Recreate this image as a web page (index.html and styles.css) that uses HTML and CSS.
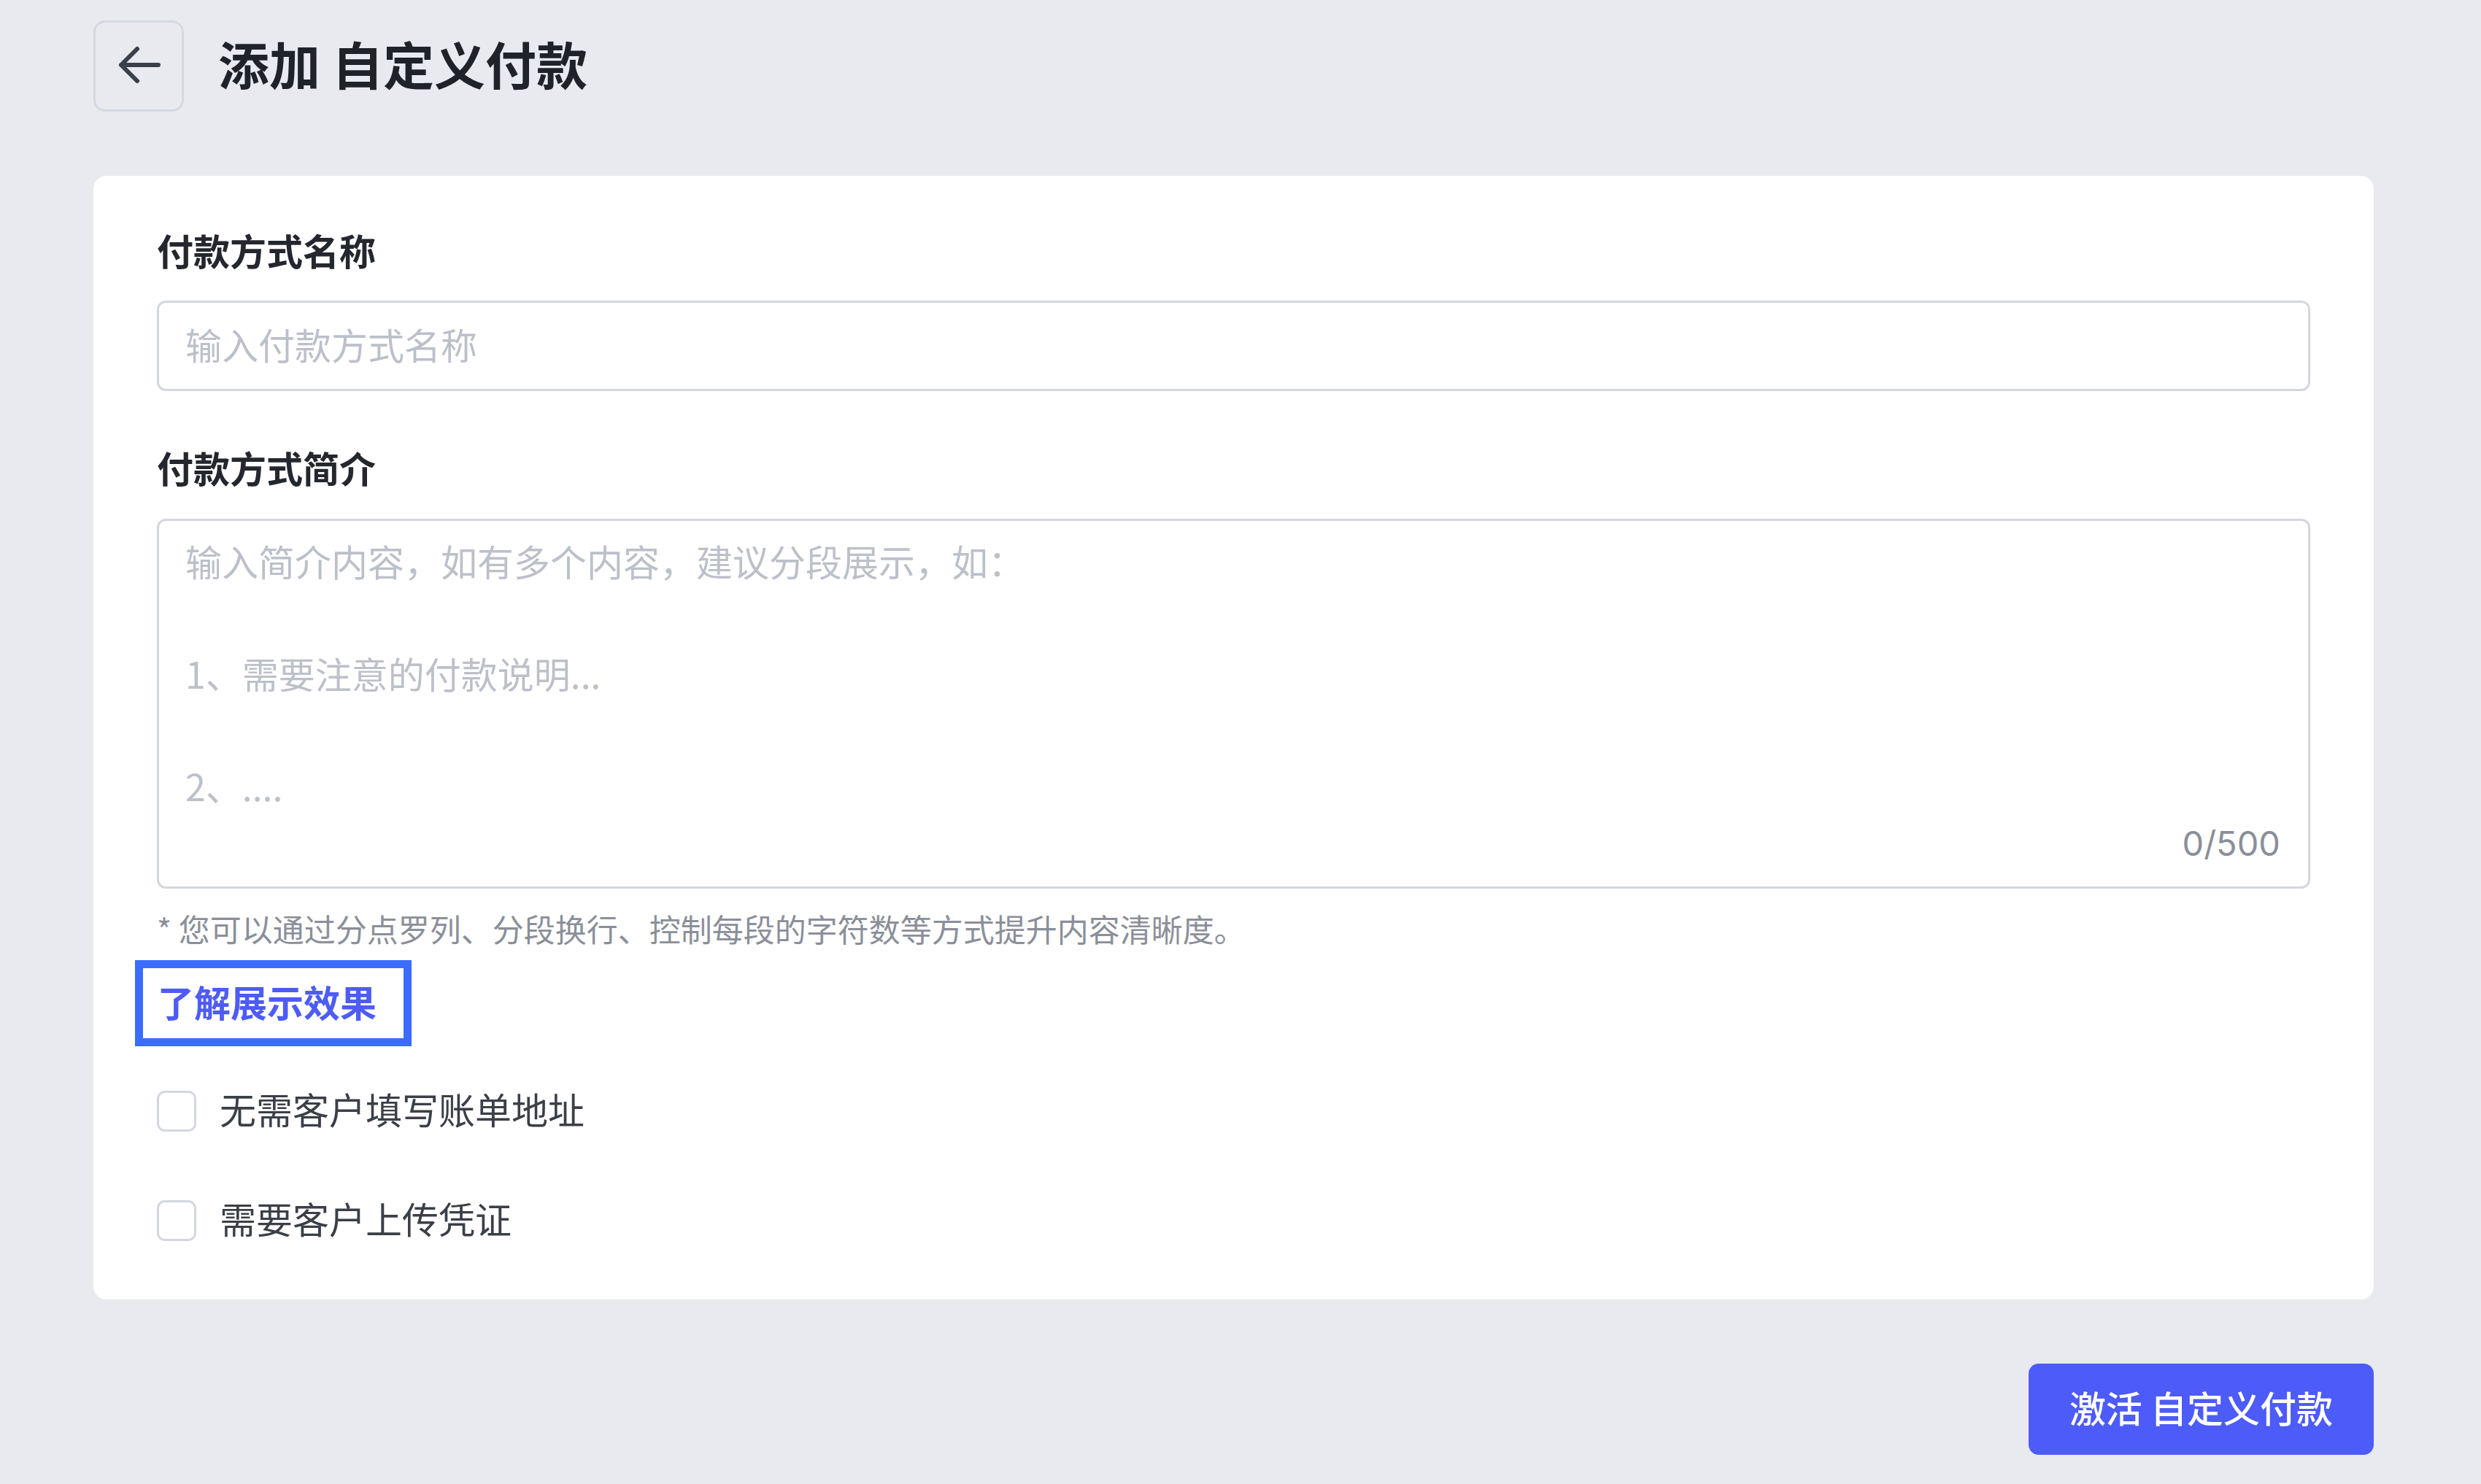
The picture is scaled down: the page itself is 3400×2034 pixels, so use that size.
FILE: index.html
```html
<!DOCTYPE html>
<html lang="zh-CN">
<head>
<meta charset="utf-8">
<title>添加 自定义付款</title>
<link rel="stylesheet" href="styles.css">
</head>
<body>
<div class="page">
  <header class="header">
    <button class="back-btn" type="button" aria-label="返回">
      <svg class="back-icon" viewBox="0 0 60 52" width="60" height="52" aria-hidden="true">
        <path d="M56 26 H5 M27 4 L5 26 L27 48" fill="none" stroke="#3a3f4a" stroke-width="6" stroke-linecap="round" stroke-linejoin="round"/>
      </svg>
    </button>
    <h1 class="title">添加 自定义付款</h1>
  </header>

  <section class="card">
    <div class="field-label">付款方式名称</div>
    <div class="input"><span class="placeholder">输入付款方式名称</span></div>

    <div class="field-label label-gap">付款方式简介</div>
    <div class="textarea">
      <div class="placeholder multi">输入简介内容，如有多个内容，建议分段展示，如：

1、需要注意的付款说明...

2、....</div>
      <span class="counter">0/500</span>
    </div>

    <p class="hint">* 您可以通过分点罗列、分段换行、控制每段的字符数等方式提升内容清晰度。</p>

    <a class="learn-link" href="#">了解展示效果</a>

    <label class="check-row first">
      <span class="checkbox"></span>
      <span class="check-text">无需客户填写账单地址</span>
    </label>
    <label class="check-row second">
      <span class="checkbox"></span>
      <span class="check-text">需要客户上传凭证</span>
    </label>
  </section>

  <div class="actions">
    <button class="primary-btn" type="button">激活 自定义付款</button>
  </div>
</div>
</body>
</html>
```

FILE: styles.css
```css
* {
  box-sizing: border-box;
}

html, body {
  margin: 0;
  padding: 0;
}

body {
  background: #e8eaef;
  font-family: "Noto Sans CJK SC", "Noto Sans", sans-serif;
  color: #22252b;
}

.page {
  width: 3125px;
  margin-left: 128px;
  padding-top: 28px;
}

.header {
  display: flex;
  align-items: center;
  gap: 47px;
  height: 125px;
}

.back-btn {
  width: 124px;
  height: 125px;
  border: 3px solid #d5d8e2;
  border-radius: 16px;
  background: transparent;
  display: flex;
  align-items: center;
  justify-content: center;
  padding: 0;
  cursor: pointer;
}

.back-icon {
  display: block;
  margin-left: 2px;
  margin-top: -3px;
}

.title {
  margin: 0 0 8px;
  font-size: 70px;
  line-height: 100px;
  font-weight: 700;
  color: #1f2228;
  letter-spacing: 0;
}

.card {
  margin-top: 88px;
  background: #ffffff;
  border-radius: 18px;
  padding: 66px 87px 80px;
}

.field-label {
  font-size: 50px;
  line-height: 70px;
  font-weight: 700;
  color: #24272d;
}

.label-gap {
  margin-top: 69px;
}

.input {
  margin-top: 35px;
  height: 124px;
  border: 3px solid #d4d7e0;
  border-radius: 12px;
  padding: 0 36px 7px;
  display: flex;
  align-items: center;
}

.placeholder {
  font-size: 50px;
  color: #bcc0c9;
  line-height: 78px;
}

.textarea {
  position: relative;
  margin-top: 36px;
  height: 507px;
  border: 3px solid #d4d7e0;
  border-radius: 12px;
  padding: 16px 36px;
}

.multi {
  white-space: pre-line;
  line-height: 77px;
}

.counter {
  position: absolute;
  right: 38px;
  bottom: 34px;
  font-family: "Inter", "Noto Sans", sans-serif;
  font-size: 47px;
  line-height: 50px;
  color: #8a8f99;
}

.hint {
  margin: 23px 0 0;
  font-size: 43px;
  line-height: 62px;
  color: #8b8f99;
}

.learn-link {
  display: inline-block;
  margin-top: 13px;
  margin-left: -30px;
  height: 118px;
  border: 11px solid #3b6cff;
  padding: 0 37px 5px 20px;
  font-size: 50px;
  line-height: 90px;
  font-weight: 700;
  color: #4d5cf5;
  text-decoration: none;
}

.check-row {
  display: flex;
  align-items: center;
  gap: 32px;
  height: 57px;
}

.check-row.first {
  margin-top: 60px;
}

.check-row.second {
  margin-top: 93px;
}

.checkbox {
  width: 54px;
  height: 56px;
  border: 3px solid #d4d7e0;
  border-radius: 11px;
  background: #ffffff;
  flex: none;
}

.check-text {
  font-size: 50px;
  line-height: 57px;
  color: #3b3f47;
  margin-bottom: 6px;
}

.actions {
  display: flex;
  justify-content: flex-end;
  margin-top: 88px;
}

.primary-btn {
  width: 473px;
  height: 125px;
  border: none;
  border-radius: 14px;
  background: #4d5bf9;
  color: #ffffff;
  font-family: "Noto Sans CJK SC", "Noto Sans", sans-serif;
  font-size: 50px;
  font-weight: 500;
  padding: 0 0 7px;
  cursor: pointer;
}
```
